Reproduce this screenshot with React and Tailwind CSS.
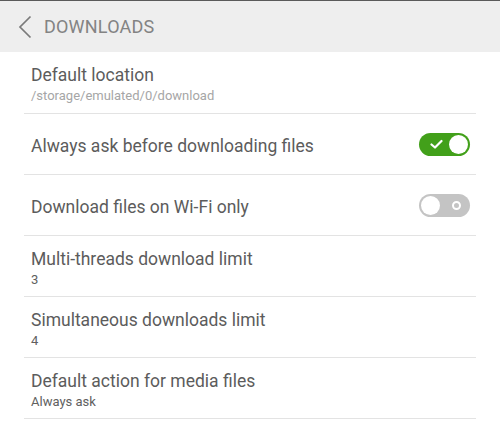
import React, { useState } from 'react';

const font = { fontFamily: 'Roboto, "Noto Sans", sans-serif' };

const Toggle = ({ on, onClick }) => (
  <button
    onClick={onClick}
    className={`relative w-[51px] h-[23px] rounded-full shrink-0 ${on ? 'bg-[#42a01a]' : 'bg-[#c4c4c4]'}`}
  >
    {on ? (
      <>
        <svg className="absolute left-[11px] top-[6px]" width="13" height="11" viewBox="0 0 13 11">
          <path d="M1.5 5.5 L5 8.5 L11.5 2" fill="none" stroke="#fff" strokeWidth="2.2" strokeLinecap="round" strokeLinejoin="round" />
        </svg>
        <span className="absolute right-[2px] top-[2px] w-[19px] h-[19px] rounded-full bg-white" />
      </>
    ) : (
      <>
        <span className="absolute left-[2px] top-[2px] w-[19px] h-[19px] rounded-full bg-white" />
        <span className="absolute right-[9px] top-[7px] w-[9px] h-[9px] rounded-full border-2 border-white" />
      </>
    )}
  </button>
);

const Row = ({ title, sub, subLight, right, h = 'h-[61px]' }) => (
  <div className={`mx-6 ${h} border-b border-[#e3e3e3] flex items-center pl-[7px] pr-[6px]`}>
    <div className={`flex-1 flex flex-col ${sub ? 'self-start pt-[13px]' : 'pt-[3px]'}`}>
      <div className="text-[17.5px] leading-[20px] text-[#5c5c5c]">{title}</div>
      {sub && (
        <div className={`mt-[3px] text-[13px] leading-[16px] ${subLight ? 'text-[#a6a6a6]' : 'text-[#606060]'}`}>
          {sub}
        </div>
      )}
    </div>
    {right}
  </div>
);

export default function App() {
  const [askFirst, setAskFirst] = useState(true);
  const [wifiOnly, setWifiOnly] = useState(false);

  return (
    <div className="w-[500px] h-[428px] bg-white overflow-hidden" style={font}>
      {/* header */}
      <div className="h-[52px] bg-[#eeeeee] border-t border-[#5a5a5a] flex items-center">
        <svg className="ml-[18px]" width="14" height="24" viewBox="0 0 14 24">
          <path d="M12.5 1.5 L2 12 L12.5 22.5" fill="none" stroke="#7a7a7a" strokeWidth="1.7" />
        </svg>
        <span className="ml-3 text-[18px] text-[#838383] tracking-[0.2px]">DOWNLOADS</span>
      </div>

      <Row title="Default location" sub="/storage/emulated/0/download" subLight h="h-[62px]" />
      <Row
        title="Always ask before downloading files"
        right={<Toggle on={askFirst} onClick={() => setAskFirst(!askFirst)} />}
      />
      <Row
        title="Download files on Wi-Fi only"
        right={<Toggle on={wifiOnly} onClick={() => setWifiOnly(!wifiOnly)} />}
      />
      <Row title="Multi-threads download limit" sub="3" />
      <Row title="Simultaneous downloads limit" sub="4" />
      <Row title="Default action for media files" sub="Always ask" />
    </div>
  );
}
